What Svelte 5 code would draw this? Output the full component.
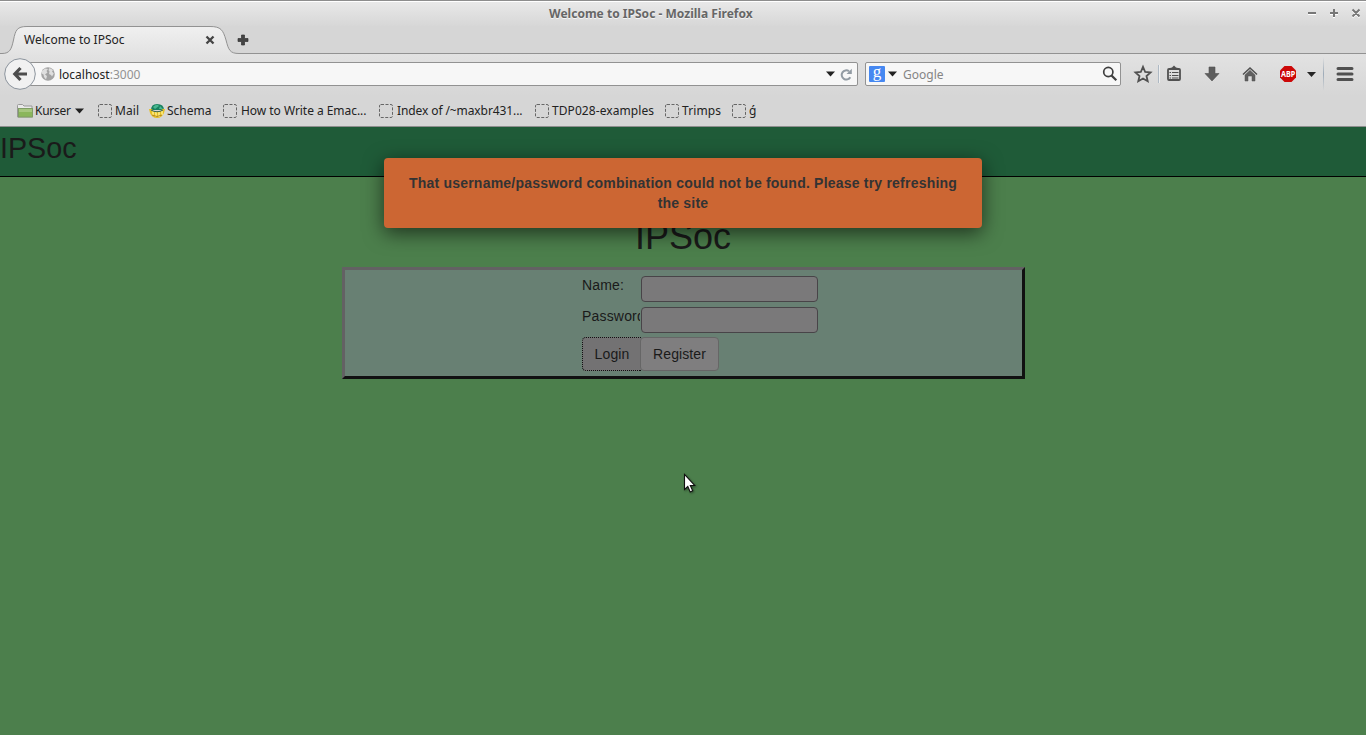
<script>
  const bookmarks = [
    { label: 'Kurser', width: 81, icon: 'folder', gap: 18, length: 36 },
    { label: 'Mail', width: 51, icon: 'empty', gap: 17, length: 24 },
    { label: 'Schema', width: 74, icon: 'globe', gap: 18, length: 44.5 },
    { label: 'How to Write a Emac...', width: 156, icon: 'empty', gap: 18, length: 125.5 },
    { label: 'Index of /~maxbr431...', width: 156, icon: 'empty', gap: 18, length: 125.5 },
    { label: 'TDP028-examples', width: 130, icon: 'empty', gap: 17, length: 102 },
    { label: 'Trimps', width: 67, icon: 'empty', gap: 17, length: 39 },
    { label: 'ǵ', width: 30, icon: 'empty', gap: 17, length: 8 }
  ];
</script>

<div class="window">
  <div class="titlebar">
    <span class="wintitle">Welcome to IPSoc - Mozilla Firefox</span>
    <svg class="controls" width="56" height="16" viewBox="0 0 56 16">
      <g fill="none" stroke="#fff" stroke-width="2" transform="translate(0 1)">
        <path d="M2 8H10M24 8H32M28 4V12M46.5 4.5L53.5 11.5M53.5 4.5L46.5 11.5" />
      </g>
      <g fill="none" stroke="#777" stroke-width="2">
        <path d="M2 8H10M24 8H32M28 4V12M46.5 4.5L53.5 11.5M53.5 4.5L46.5 11.5" />
      </g>
    </svg>
  </div>

  <div class="tabs">
    <svg class="tabshape" width="1366" height="29" viewBox="0 0 1366 29">
      <defs>
        <linearGradient id="tab" x1="0" y1="0" x2="0" y2="1">
          <stop offset="0" stop-color="#f0f0f0" /><stop offset="1" stop-color="#e2e2e2" />
        </linearGradient>
      </defs>
      <path d="M0 27.5H2C10 27.5 11.5 23 13.5 14C15.500 4 17 .5 27 .5H210C221 .5 223 4 226 14C228.500 24 230 27.500 239 27.500V29H0Z" fill="url(#tab)" />
      <path d="M0 27.5H2C10 27.5 11.5 23 13.5 14C15.500 4 17 .5 27 .5H210C221 .5 223 4 226 14C228.500 24 230 27.500 239 27.500H1366" fill="none" stroke="#929292" />
    </svg>
    <span class="tabtitle">Welcome to IPSoc</span>
    <svg class="tabclose" width="10" height="10" viewBox="0 0 10 10"><path d="M1.500 1.500L8.500 8.500M8.500 1.500L1.500 8.500" stroke="#444" stroke-width="2.300" /></svg>
    <svg class="newtab" width="12" height="12" viewBox="0 0 12 12"><path d="M4.500 1H7.500V4.500H11V7.500H7.500V11H4.500V7.500H1V4.500H4.500Z" fill="#444" stroke="#333" stroke-width=".7" /></svg>
  </div>

  <div class="nav">
    <svg class="back" width="32" height="32" viewBox="0 0 32 32">
      <circle cx="16" cy="16" r="15.300" fill="#f1f1f1" stroke="#8b939c" />
      <path d="M16.500 10L10.800 16L16.500 22M11 16H23" fill="none" stroke="#4d4d4d" stroke-width="3.200" />
    </svg>
    <div class="url">
      <svg class="site" width="14" height="14" viewBox="0 0 14 14">
        <circle cx="7" cy="7" r="6.800" fill="#a3a3a3" />
        <path d="M1 4L4 1.500L7 2L5.500 4L6.500 5.500L4 7.500L6 9L5 12.500L3 10L2.500 7.500L.7 6.500ZM8.500 1L12 3L11 4.500L12.800 6.500L11 9.500L10 8L8 7L8.500 4.500L7.500 3Z" fill="#dedede" />
      </svg>
      <span class="address">localhost<i>:3000</i></span>
      <svg width="9" height="6" viewBox="0 0 9 6"><path d="M0 .5H9L4.500 5.500Z" fill="#222" /></svg>
      <svg class="reload" width="13" height="13" viewBox="0 0 13 13">
        <path d="M10.300 9.200A4.600 4.600 0 1 1 9 3.200" fill="none" stroke="#929ba3" stroke-width="2" />
        <path d="M11.800 .7V6H6.500Z" fill="#929ba3" />
      </svg>
    </div>
    <div class="search">
      <span class="google">g</span>
      <svg width="9" height="6" viewBox="0 0 9 6"><path d="M0 .5H9L4.500 5.500Z" fill="#222" /></svg>
      <span class="engine">Google</span>
      <svg width="16" height="16" viewBox="0 0 16 16"><circle cx="6.300" cy="6" r="4.600" fill="none" stroke="#3e3e3e" stroke-width="1.700" /><path d="M9.500 9.500L14.300 14.200" stroke="#3e3e3e" stroke-width="2.300" /></svg>
    </div>
    <svg class="tools" width="236" height="42" viewBox="0 0 236 42">
      <defs>
        <linearGradient id="divider" x1="0" y1="0" x2="0" y2="1">
          <stop offset="0" stop-color="#9eabb8" stop-opacity="0" /><stop offset=".5" stop-color="#9eabb8" /><stop offset="1" stop-color="#9eabb8" stop-opacity="0" />
        </linearGradient>
      </defs>
      <path d="M22 12.800L24.200 18L29.500 18.400L25.500 22L26.700 27.200L22 24.500L17.300 27.200L18.500 22L14.500 18.400L19.800 18Z" fill="none" stroke="#505050" stroke-width="1.800" />
      <path d="M37.500 11V29" stroke="#aeb9c4" /><path d="M38.500 11V29" stroke="#eee" />
      <rect x="47" y="15" width="12" height="11" rx="1" fill="none" stroke="#505050" stroke-width="1.800" />
      <path d="M49 14L51 13.500L53 11.500L55 13.500L57 14V16H49Z" fill="#505050" />
      <path d="M48.500 18.500H50M51 18.500H57.500M48.500 21.500H50M51 21.500H57.500M48.500 24H50M51 24H57.500" stroke="#505050" />
      <path d="M88 13H94V19.500H98L91 27L84 19.500H88Z" fill="#5d5d5d" stroke="#505050" stroke-width=".6" />
      <path d="M122 20.500L129 14L136 20.500" fill="none" stroke="#505050" stroke-width="1.600" />
      <path d="M124 21L129 16.300L134 21V27H131V22H127V27H124Z" fill="#606060" stroke="#505050" stroke-width=".5" />
      <path d="M163.500 12H170.500L175 16.500V23.500L170.500 28H163.500L159 23.500V16.500Z" fill="#cc0808" />
      <text x="160" y="23.300" textLength="14.200" lengthAdjust="spacingAndGlyphs" fill="#fff" font-size="9" font-weight="700">ABP</text>
      <path d="M186 18H195L190.500 23Z" fill="#252525" />
      <rect x="202" y="3" width="1" height="34" fill="url(#divider)" />
      <path d="M217 14.500H231M217 20H231M217 25.500H231" stroke="#505050" stroke-width="3" stroke-linecap="round" />
    </svg>
  </div>

  <div class="bookmarks">
    {#each bookmarks as b}
      <div class="bookmark" style="width: {b.width}px">
        <span class="icon" style="width: {b.gap}px">
          {#if b.icon === 'folder'}
            <svg width="16" height="16" viewBox="0 0 16 16">
              <path d="M.5 14V2.500Q.5 1.500 1.500 1.500H5.500L7 3H15V14Z" fill="#e9e9e9" stroke="#999" />
              <rect x="1.500" y="5.500" width="14" height="8.500" fill="#8ab65b" stroke="#809d65" /><path d="M2 6H15V9H2Z" fill="#a5c67e" />
            </svg>
          {:else if b.icon === 'globe'}
            <svg width="16" height="16" viewBox="0 0 16 16">
              <path d="M2 7Q2 1 8 1Q15 1 15 7Z" fill="#19815f" />
              <path d="M4 4Q8 0 10 3L6 6ZM11 3L14 6H10Z" fill="#49b790" />
              <path d="M0 6H3L4 8H12L13 6H16L15 10Q13 15 8 15Q3 15 1 10Z" fill="#e4bf25" />
              <path d="M4 8.500V12M7 9V14M10 9V14M13 8V12" stroke="#fff18b" stroke-width="1.500" />
              <path d="M2 7Q8 10.500 14 7" fill="none" stroke="#37665c" />
              <path d="M3 12Q8 15 13 12" fill="none" stroke="#b88a20" />
            </svg>
          {:else}
            <svg width="14" height="16" viewBox="0 0 14 16"><rect x=".5" y="1.500" width="13" height="13" rx="1.500" fill="none" stroke="#666" stroke-dasharray="3 1.500" /></svg>
          {/if}
        </span>
        <svg class="label" width={b.length + 2} height="20"><text x="0" y="14" textLength={b.length}>{b.label}</text></svg>
        {#if b.icon === 'folder'}
          <svg class="drop" width="9" height="6" viewBox="0 0 9 6"><path d="M0 .5H9L4.500 5.500Z" fill="#222" /></svg>
        {/if}
      </div>
    {/each}
  </div>

  <main>
    <header>IPSoc</header>
    <h1>IPSoc</h1>
    <form class="panel" onsubmit={(e) => e.preventDefault()}>
      <label class="row"><span>Name:</span><input type="text" /></label>
      <label class="row"><span>Password:</span><input type="password" /></label>
      <div class="buttons"><button class="login" type="button">Login</button><button class="register" type="button">Register</button></div>
    </form>
  </main>

  <div class="alert">That username/password combination could not be found. Please try refreshing the site</div>
  <svg class="cursor" width="14" height="22" viewBox="0 0 14 22"><path d="M1.500 1.500V16.500L4.800 13.500L7.200 19L9.700 17.800L7.300 12.500H11.700Z" fill="#fff" stroke="#111" stroke-width="1.100" /></svg>
</div>

<style>
  :global(body) { margin: 0; overflow: hidden; }
  .window { position: relative; width: 1366px; height: 735px; overflow: hidden; display: flex; flex-direction: column; box-sizing: border-box; font: 12px/18px "Noto Sans", sans-serif; color: #222; background: #d6d6d6; }
  .window * { box-sizing: border-box; }
  svg { display: block; flex: none; }
  .titlebar { height: 26px; border-top: 1px solid #8d8d8d; box-shadow: inset 0 1px #fff; background: linear-gradient(#e9e9e9, #d7d7d7); display: flex; justify-content: space-between; padding: 3px 4px 0 549px; }
  .wintitle { font-weight: 700; color: #666; text-shadow: 0 1px #f5f5f5; white-space: nowrap; margin-top: 1px; letter-spacing: .02px; }
  .controls { margin-top: 1px; }
  .tabs { height: 28px; position: relative; display: flex; align-items: flex-start; padding: 5px 0 0 24px; }
  .tabshape { position: absolute; left: 0; top: 0; }
  .tabtitle { position: relative; width: 181px; white-space: nowrap; }
  .tabclose { position: relative; margin-top: 4px; }
  .newtab { position: relative; margin: 3px 0 0 22px; }
  .nav { height: 42px; background: linear-gradient(#e2e2e2, #d6d6d6); display: flex; align-items: flex-start; }
  .back { margin: 4px 0 0 4px; position: relative; z-index: 1; }
  .url, .search { height: 24px; margin-top: 8px; border: 1px solid #929292; border-radius: 2px; background: #f7f7f7; display: flex; align-items: center; }
  .url { width: 829px; margin-left: -7px; padding: 0 4px 0 11px; }
  .address { flex: 1; margin-left: 4px; padding-top: 2px; }
  .address i { font-style: normal; color: #929292; }
  .reload { margin-left: 5px; }
  .search { width: 256px; margin-left: 7px; padding: 0 2px 0 3px; }
  .google { width: 16px; height: 16px; border-radius: 1px; background: #4688f1; color: #fff; font: 17px/12px "Liberation Serif", serif; text-align: center; margin-right: 3px; }
  .engine { flex: 1; margin-left: 6px; padding-top: 2px; color: #858585; }
  .bookmarks { height: 31px; border-bottom: 1px solid #8e8e8e; display: flex; align-items: center; padding: 0 0 0 17px; }
  .bookmark { display: flex; align-items: center; height: 20px; }
  .icon { flex: none; }
  .label { overflow: visible; font: 12px "Noto Sans", sans-serif; fill: #222; }
  .drop { margin-left: 2px; }
  main { flex: 1; background: #4c7f4c; font: 14px/20px "Liberation Sans", Arial, sans-serif; color: #1a1a1a; }
  header { height: 50px; border-bottom: 1px solid #000; background: #1f5b38; font-size: 28.7px; line-height: 42px; }
  h1 { margin: 40px 0 10px; font-size: 36px; line-height: 40px; font-weight: 400; text-align: center; }
  .panel { width: 683px; height: 112px; margin: 0 auto; border: 3px solid; border-color: #636163 #111 #111 #636163; background: #688073; padding: 6px 0 0 237px; }
  .row { display: flex; height: 31px; }
  .row span { width: 58.5px; height: 20px; margin: -1px .5px 0 0; padding-left: .5px; letter-spacing: .18px; overflow: hidden; white-space: nowrap; }
  .row input { width: 177px; height: 26px; margin: 0; border: 1px solid #484448; border-radius: 4px; background: #7a797a; outline: none; }
  .buttons { display: flex; margin-top: -1px; }
  button { height: 34px; border: 1px solid #666; border-radius: 4px; background: #7f7e7f; color: #1a1a1a; padding: 0; font: 14px/20px "Liberation Sans", Arial, sans-serif; letter-spacing: .1px; }
  .login { width: 59px; border: 1px dotted #111; border-right: 0; border-radius: 4px 0 0 4px; background: #737273; padding-left: 1px; }
  .register { width: 79px; margin-left: -1px; padding-left: 1px; }
  .alert { position: absolute; left: 384px; top: 158px; width: 598px; height: 70px; padding: 15px 20px; border-radius: 4px; background: #cc6633; color: #333; font: bold 14px/20px "Liberation Sans", Arial, sans-serif; letter-spacing: .21px; text-align: center; box-shadow: 0 5px 20px rgba(0,0,0,.6); }
  .cursor { position: absolute; left: 683px; top: 473px; filter: drop-shadow(1px 1px 1px rgba(0,0,0,.4)); }
</style>
